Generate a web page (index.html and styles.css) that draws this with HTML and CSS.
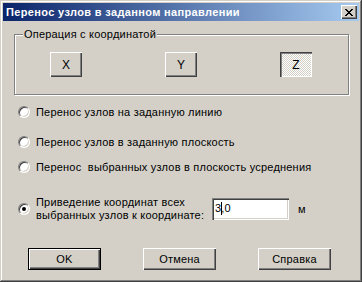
FILE: index.html
```html
<!DOCTYPE html>
<html lang="ru">
<head>
  <meta charset="UTF-8">
  <title>Перенос узлов в заданном направлении</title>
  <link rel="stylesheet" href="styles.css">
</head>
<body>
  <div class="window">
    <div class="titlebar">
      <span class="title">Перенос узлов в заданном направлении</span>
      <span class="close">
        <svg width="8" height="7" viewBox="0 0 8 7" shape-rendering="crispEdges">
          <path d="M0 0h2v1h-2zM6 0h2v1h-2zM1 1h2v1h-2zM5 1h2v1h-2zM2 2h4v1h-4zM3 3h2v1h-2zM2 4h4v1h-4zM1 5h2v1h-2zM5 5h2v1h-2zM0 6h2v1h-2zM6 6h2v1h-2z" fill="#000"/>
        </svg>
      </span>
    </div>

    <div class="group">
      <span class="group-title">Операция с координатой</span>
      <div class="axis-row">
        <span class="btn axis">X</span>
        <span class="btn axis">Y</span>
        <span class="btn axis pressed">Z</span>
      </div>
    </div>

    <div class="option first">
      <span class="radio"></span>
      <span>Перенос узлов на заданную линию</span>
    </div>
    <div class="option second">
      <span class="radio"></span>
      <span>Перенос узлов в заданную плоскость</span>
    </div>
    <div class="option third">
      <span class="radio"></span>
      <span>Перенос&nbsp; выбранных узлов в плоскость усреднения</span>
    </div>
    <div class="option fourth">
      <span class="radio checked"></span>
      <span class="long-label">Приведение координат всех<br>выбранных узлов к координате:</span>
      <span class="edit">3<span class="caret"></span>,0</span>
      <span class="unit">м</span>
    </div>

    <div class="buttons">
      <span class="btn push default">OK</span>
      <span class="btn push">Отмена</span>
      <span class="btn push">Справка</span>
    </div>
  </div>
</body>
</html>
```

FILE: styles.css
```css
body { margin: 0; font-family: "Liberation Sans", Arial, sans-serif; font-size: 11px; letter-spacing: 0.2px; color: #000; }

.window { width: 362px; height: 282px; box-sizing: border-box; padding: 3px; background: #d4d0c8;
  box-shadow: inset -1px -1px #404040, inset 1px 1px #d4d0c8, inset -2px -2px #808080, inset 2px 2px #fff; }

.titlebar { height: 18px; display: flex; align-items: center; justify-content: space-between; padding: 0 2px 0 3px;
  background: linear-gradient(to right, #0a246a, #a6caf0); }
.title { color: #fff; font-weight: bold; font-size: 11px; letter-spacing: 0.35px; }
.close { width: 16px; height: 14px; box-sizing: border-box; display: flex; align-items: center; justify-content: center;
  background: #d4d0c8; box-shadow: inset 1px 1px #fff, inset -1px -1px #404040, inset -2px -2px #808080; }
.close svg { display: block; margin-left: -1px; }

.btn { display: flex; align-items: center; justify-content: center; box-sizing: border-box; background: #d4d0c8;
  box-shadow: inset 1px 1px #fff, inset -1px -1px #404040, inset -2px -2px #808080; }

.group { position: relative; margin: 13px 0 0 11px; width: 335px; height: 61px; box-sizing: border-box;
  border: 1px solid #808080; box-shadow: inset 1px 1px #fff, 1px 1px #fff; }
.group-title { position: absolute; top: -8px; left: 8px; padding: 0 1px; background: #d4d0c8; line-height: 14px; }
.axis-row { display: flex; gap: 83px; padding: 17px 0 0 35px; }
.axis { width: 32px; height: 25px; font-size: 12px; }
.pressed { background: repeating-conic-gradient(#fff 0 25%, #d4d0c8 0 50%) 0 0 / 2px 2px;
  box-shadow: inset 1px 1px #404040, inset 2px 2px #808080, inset -1px -1px #fff; }

.option { display: flex; align-items: center; gap: 6px; margin-left: 15px; line-height: 14px; }
.first { margin-top: 10px; }
.second { margin-top: 16px; }
.third { margin-top: 11px; }
.fourth { margin-top: 22px; line-height: 13px; }

.radio { width: 12px; height: 12px; box-sizing: border-box; border-radius: 50%; background: #fff; position: relative;
  border: 1px solid; border-color: #808080 #fff #fff #808080;
  box-shadow: inset 1px 1px #404040, inset -1px -1px #d4d0c8; }
.radio.checked::after { content: ""; position: absolute; left: 3px; top: 3px; width: 4px; height: 4px; border-radius: 50%; background: #000; }

.long-label { width: 170px; }
.edit { width: 77px; height: 22px; box-sizing: border-box; padding: 4px 0 0 3px; background: #fff;
  box-shadow: inset 1px 1px #808080, inset 2px 2px #404040, inset -1px -1px #fff, inset -2px -2px #d4d0c8; line-height: 13px; }
.caret { display: inline-block; width: 1px; height: 13px; background: #000; vertical-align: top; margin-right: -1px; }
.unit { margin-left: 3px; }

.buttons { display: flex; gap: 42px; margin: 26px 0 0 25px; }
.push { width: 73px; height: 22px; }
.default { box-shadow: inset 0 0 0 1px #000, inset 2px 2px #fff, inset -2px -2px #404040, inset -3px -3px #808080; }
```
